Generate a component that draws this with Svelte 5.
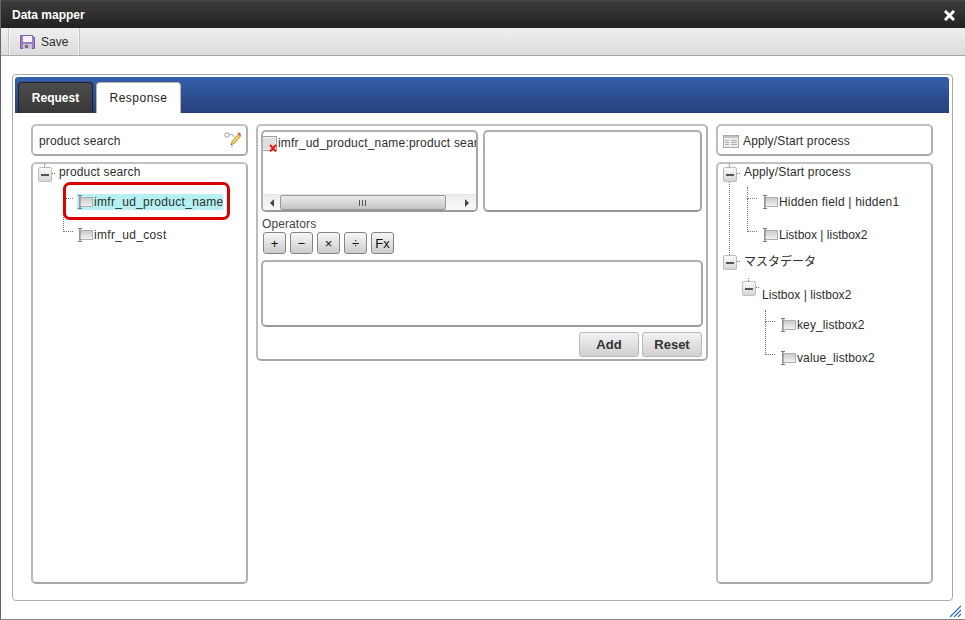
<script>
  const rootsLeft = [
    { label: 'product search', leaves: [
      { label: 'imfr_ud_product_name', selected: true },
      { label: 'imfr_ud_cost' }
    ] }
  ];
  const ops = ['+', '−', '×', '÷', 'Fx'];
</script>

{#snippet fieldIcon()}
  <svg class="field-icon" width="17" height="14" viewBox="0 0 17 14">
    <defs>
      <linearGradient id="fieldfill" x1="0" y1="0" x2="0" y2="1">
        <stop offset="0" stop-color="#c8c8c8"/>
        <stop offset="1" stop-color="#f4f4f4"/>
      </linearGradient>
    </defs>
    <rect x="2.500" y="2.500" width="13" height="9" fill="url(#fieldfill)" stroke="#b0b0b0"/>
    <path d="M1 0.500h4M3 0.500v13M1 13.500h4" fill="none" stroke="#7a7a7a"/>
  </svg>
{/snippet}

{#snippet toggle()}
  <span class="toggle"><span class="dash"></span></span>
{/snippet}

{#snippet leaf(label, selected = false)}
  <div class="leaf">
    <span class="leaf-label" class:selected>{@render fieldIcon()}<span>{label}</span></span>
  </div>
{/snippet}

<div class="window">
  <header class="titlebar">
    <span class="title">Data mapper</span>
    <svg class="close" width="11" height="11" viewBox="0 0 11 11">
      <path d="M2 2l7 7M9 2l-7 7" stroke="#fff" stroke-width="3" stroke-linecap="square"/>
    </svg>
  </header>

  <div class="toolbar">
    <button class="save">
      <svg width="15" height="14" viewBox="0 0 15 14">
        <path d="M0.500 0.500h12l2 2v11h-14z" fill="#a07cc4" stroke="#7a5fa0"/>
        <rect x="3" y="1" width="9" height="6" fill="#f6f4fa"/>
        <rect x="3" y="9" width="9" height="5" fill="#c8c4d0"/>
        <rect x="5" y="10" width="3" height="3" fill="#6f6a80"/>
      </svg>
      <span>Save</span>
    </button>
  </div>

  <main class="content">
    <div class="frame">
      <div class="tabbar">
        <span class="tab dark">Request</span>
        <span class="tab active">Response</span>
      </div>

      <div class="columns">
        <section class="col">
          <div class="box head">
            <span>product search</span>
            <svg class="wand" width="18" height="17" viewBox="0 0 18 17">
              <circle cx="3" cy="4" r="2.200" fill="#fff" stroke="#999"/>
              <path d="M5.500 3.500h3l1.500 3" fill="none" stroke="#aaa"/>
              <path d="M8 15v2" stroke="#777" stroke-dasharray="1 1"/>
              <path d="M14.500 3L8 10.500 7 14l3.300-1.500L16.800 5z" fill="#f4cc52" stroke="#9a8440" stroke-width="0.700"/>
              <path d="M14.700 1.300l2.500 2.300-1.300 1.300-2.400-2.300z" fill="#e0504a"/>
              <path d="M7 14l1-0.500-0.700-0.800z" fill="#222"/>
            </svg>
          </div>
          <div class="box tree">
            {#each rootsLeft as root}
              <div class="root">{@render toggle()}<span class="root-text">{root.label}</span></div>
              <div class="leaves left-leaves">
                {#each root.leaves as l}
                  {@render leaf(l.label, l.selected)}
                {/each}
              </div>
            {/each}
            <div class="highlight"></div>
          </div>
        </section>

        <section class="middle">
          <div class="mid-top">
            <div class="box list">
              <div class="list-body">
                <span class="mapped">
                  <svg width="17" height="17" viewBox="0 0 17 17">
                    <rect x="0.500" y="0.500" width="15" height="14" fill="#f2f2f2" stroke="#9c9c9c"/>
                    <rect x="2" y="2" width="12" height="11" fill="#dedede"/>
                    <path d="M9 9l6 6.500M15 9l-6 6.500" stroke="#ee1c14" stroke-width="2"/>
                  </svg><span>imfr_ud_product_name:product search</span>
                </span>
              </div>
              <div class="scrollbar">
                <span class="arrow"><svg width="5" height="8" viewBox="0 0 5 8"><path d="M5 0v8L1 4z" fill="#444"/></svg></span>
                <span class="thumb"><span class="grip"></span></span>
                <span class="arrow"><svg width="5" height="8" viewBox="0 0 5 8"><path d="M0 0v8l4-4z" fill="#444"/></svg></span>
              </div>
            </div>
            <div class="box list blank"></div>
          </div>

          <div class="ops-label">Operators</div>
          <div class="ops">
            {#each ops as o}
              <button class="op">{o}</button>
            {/each}
          </div>

          <div class="box formula"></div>

          <div class="actions">
            <button class="act">Add</button>
            <button class="act">Reset</button>
          </div>
        </section>

        <section class="col">
          <div class="box head start">
            <svg width="16" height="13" viewBox="0 0 16 13">
              <rect x="0.500" y="0.500" width="15" height="12" fill="#eee" stroke="#aaa"/>
              <rect x="1" y="1" width="14" height="2" fill="#c4c4c4"/>
              <path d="M2 5.500h4M2 7.500h4M2 9.500h4M8 5.500h6M8 7.500h6M8 9.500h6" stroke="#b0b0b0"/>
            </svg>
            <span>Apply/Start process</span>
          </div>
          <div class="box tree right">
            <div class="trunk"></div>
            <div class="root first">{@render toggle()}<span class="root-text">Apply/Start process</span></div>
            <div class="leaves right-leaves">
              {@render leaf('Hidden field | hidden1')}
              {@render leaf('Listbox | listbox2')}
            </div>
            <div class="root second">{@render toggle()}<span class="root-text jp">マスタデータ</span></div>
            <div class="sub">
              <div class="subroot">{@render toggle()}<span class="sub-text">Listbox | listbox2</span></div>
              <div class="leaves sub-leaves">
                {@render leaf('key_listbox2')}
                {@render leaf('value_listbox2')}
              </div>
            </div>
          </div>
        </section>
      </div>
    </div>
  </main>

  <svg class="resizer" width="12" height="12" viewBox="0 0 12 12">
    <path d="M1 12L12 1M5 12l7-7M9 12l3-3" stroke="#1a66b0" stroke-width="1.100"/>
  </svg>
</div>

<style>
  :global(body) {
    margin: 0;
    font-family: "Liberation Sans", Arial, "Noto Sans CJK JP", sans-serif;
    font-size: 12px;
    color: #2e2e2e;
    background: #fff;
  }
  .window {
    position: relative;
    width: 965px;
    height: 620px;
    box-sizing: border-box;
    overflow: hidden;
    background: #fff;
    border-left: 1px solid #666;
    border-bottom: 1px solid #888;
  }
  .titlebar {
    height: 28px;
    display: flex;
    align-items: center;
    justify-content: space-between;
    margin: 0 0 0 -1px;
    padding: 1px 10px 0 12px;
    box-sizing: border-box;
    background: linear-gradient(#4a4a4a 0, #3b3b3b 8%, #222 100%);
    color: #fff;
    font-weight: bold;
    font-size: 12px;
  }
  .close { margin-top: 1px; }
  .toolbar {
    height: 28px;
    box-sizing: border-box;
    display: flex;
    padding-left: 7px;
    background: linear-gradient(#efefef, #dcdcdc);
    border-bottom: 1px solid #a8a8a8;
  }
  .save {
    display: flex;
    align-items: center;
    gap: 6px;
    width: 72px;
    padding: 0 0 0 11px;
    font: inherit;
    color: #2e2e2e;
    background: transparent;
    border: 0;
    border-left: 1px solid #c4c4c4;
    border-right: 1px solid #c4c4c4;
    box-shadow: inset 1px 0 #f6f6f6, inset -1px 0 #f6f6f6;
  }
  .content { padding: 18px 11px 0 11px; }
  .frame {
    width: 941px;
    height: 527px;
    box-sizing: border-box;
    border: 1px solid #aaa;
    border-radius: 4px;
    padding: 2px 3px 2px 2px;
  }
  .tabbar {
    height: 36px;
    box-sizing: border-box;
    display: flex;
    align-items: flex-end;
    gap: 3px;
    padding-left: 3px;
    border-radius: 3px 3px 0 0;
    background: linear-gradient(#3660ac, #27407b);
  }
  .tab {
    height: 31px;
    box-sizing: border-box;
    display: flex;
    align-items: center;
    justify-content: center;
    border-radius: 4px 4px 0 0;
    padding-bottom: 1px;
  }
  .dark {
    width: 75px;
    color: #fff;
    font-weight: bold;
    background: linear-gradient(#4c4c4c, #383838);
    border: 1px solid #222;
    border-bottom: 0;
  }
  .active {
    width: 85px;
    color: #222;
    background: #fff;
    border: 1px solid #b5b5b5;
    border-bottom: 0;
    letter-spacing: 0.5px;
  }
  .columns {
    display: grid;
    grid-template-columns: 217px 452px 217px;
    gap: 8px;
    padding: 11px 0 0 16px;
    align-items: start;
  }
  .col { display: flex; flex-direction: column; gap: 6px; }
  .box {
    box-sizing: border-box;
    border: 2px solid;
    border-color: #c2c2c2 #b0b0b0 #a8a8a8 #bcbcbc;
    border-radius: 5px;
    background: #fff;
  }
  .head {
    height: 32px;
    display: flex;
    align-items: center;
    padding: 2px 4px 0 6px;
    justify-content: space-between;
    letter-spacing: 0.15px;
  }
  .start { justify-content: flex-start; gap: 4px; padding-left: 5px; }
  .wand { margin-top: -4px; }
  .tree {
    position: relative;
    height: 422px;
    overflow: hidden;
  }
  .root {
    position: relative;
    height: 17px;
    display: flex;
    align-items: center;
    padding-left: 5px;
  }
  .toggle {
    position: relative;
    flex: none;
    width: 14px;
    height: 15px;
    margin-top: 4px;
    box-sizing: border-box;
    border: 1px solid #bdbdbd;
    border-radius: 2px;
    background: linear-gradient(#fafafa, #d6d6d6);
    display: flex;
    align-items: center;
    justify-content: center;
  }
  .toggle::before {
    content: "";
    position: absolute;
    left: 5px;
    top: -4px;
    height: 3px;
    border-left: 1px dotted #777;
  }
  .toggle::after {
    content: "";
    position: absolute;
    left: 13px;
    top: 5px;
    width: 3px;
    border-top: 1px dotted #777;
  }
  .dash { width: 8px; height: 2px; background: #555; }
  .root-text { margin-left: 7px; margin-bottom: 2px; letter-spacing: 0.15px; }
  .root-text.jp { letter-spacing: 0; margin-bottom: 0; }
  .leaves { position: relative; }
  .leaf {
    position: relative;
    height: 33px;
    display: flex;
    align-items: center;
  }
  .leaf::before {
    content: "";
    position: absolute;
    left: var(--line-x);
    bottom: 19px;
    width: 10px;
    height: 33px;
    box-sizing: border-box;
    border-left: 1px dotted #777;
    border-bottom: 1px dotted #777;
  }
  .leaf:first-child::before { height: 12px; }
  .leaf-label {
    display: inline-flex;
    align-items: center;
    height: 16px;
    letter-spacing: 0.2px;
    white-space: nowrap;
  }
  .field-icon { flex: none; display: block; }

  .left-leaves {
    --line-x: -14px;
    margin-top: 4px;
    padding-left: 44px;
  }
  .left-leaves .leaf-label { letter-spacing: 0.32px; }
  .left-leaves .leaf-label.selected { background: #b5f0f2; letter-spacing: 0.3px; }
  .right-leaves {
    --line-x: -15px;
    margin-top: 4px;
    padding-left: 44px;
  }
  .right-leaves .leaf:last-child .leaf-label { letter-spacing: 0; }
  .highlight {
    position: absolute;
    left: 30px;
    top: 18px;
    width: 167px;
    height: 38px;
    box-sizing: border-box;
    border: 3px solid #d90000;
    border-radius: 7px;
  }
  .trunk {
    position: absolute;
    left: 11px;
    top: 0;
    height: 91px;
    border-left: 1px dotted #777;
  }
  .second { margin-top: 1px; }
  .sub { position: relative; padding-left: 24px; margin-top: 12px; }
  .subroot {
    position: relative;
    height: 28px;
  }
  .subroot .toggle { position: absolute; left: 0; top: 0; margin: 0; }
  .sub-text { position: absolute; left: 20px; top: 7px; letter-spacing: 0.05px; white-space: nowrap; }
  .sub-leaves { --line-x: -15px; padding-left: 38px; margin-top: -1px; }
  .sub-leaves .leaf-label { letter-spacing: 0.12px; }

  .middle {
    box-sizing: border-box;
    height: 237px;
    border: 2px solid;
    border-color: #c2c2c2 #b0b0b0 #a8a8a8 #bcbcbc;
    border-radius: 5px;
    padding: 4px 3px 0 3px;
  }
  .mid-top { display: flex; gap: 5px; }
  .list {
    width: 217px;
    height: 82px;
    border-color: #b0b0b0 #a8a8a8 #999 #b0b0b0;
    display: flex;
    flex-direction: column;
    overflow: hidden;
  }
  .blank { width: 219px; }
  .list-body { flex: 1; overflow: hidden; white-space: nowrap; padding-top: 3px; }
  .mapped { display: inline-flex; align-items: flex-start; letter-spacing: 0.2px; line-height: 16px; }
  .mapped svg { margin: 1px 0 0 -2px; }
  .scrollbar {
    height: 16px;
    display: flex;
    align-items: stretch;
    background: linear-gradient(#ededed, #f9f9f9);
    border-top: 1px solid #e4e4e4;
    box-sizing: border-box;
  }
  .arrow {
    width: 17px;
    display: flex;
    align-items: center;
    justify-content: center;
  }
  .thumb {
    flex: 1;
    margin: 0 13px 0 0;
    display: flex;
    align-items: center;
    justify-content: center;
    border: 1px solid #999;
    border-radius: 2px;
    background: linear-gradient(#ececec, #c4c4c4);
  }
  .grip {
    width: 8px;
    height: 6px;
    background: repeating-linear-gradient(90deg, #555 0 1px, transparent 1px 3px);
  }
  .ops-label { margin-top: 5px; margin-left: 1px; line-height: 14px; height: 15px; letter-spacing: 0.1px; color: #444; }
  .ops { display: flex; gap: 4px; margin-left: 2px; }
  .op {
    width: 23px;
    height: 22px;
    padding: 0;
    font: 13px "Liberation Sans", Arial, sans-serif;
    color: #111;
    border: 1px solid #858585;
    border-radius: 3px;
    background: linear-gradient(#f7f7f7, #cccccc);
  }
  .formula { height: 67px; width: 442px; margin-top: 6px; border-color: #b0b0b0 #a8a8a8 #999 #b0b0b0; }
  .actions { display: flex; justify-content: flex-end; gap: 3px; margin-top: 5px; width: 441px; }
  .act {
    height: 25px;
    padding: 0;
    font: bold 13px "Liberation Sans", Arial, sans-serif;
    color: #333;
    border: 1px solid #b8b8b8;
    border-radius: 3px;
    background: linear-gradient(#f2f2f2, #d0d0d0);
    width: 60px;
  }
  .resizer { position: absolute; right: 4px; bottom: 2px; }
</style>
